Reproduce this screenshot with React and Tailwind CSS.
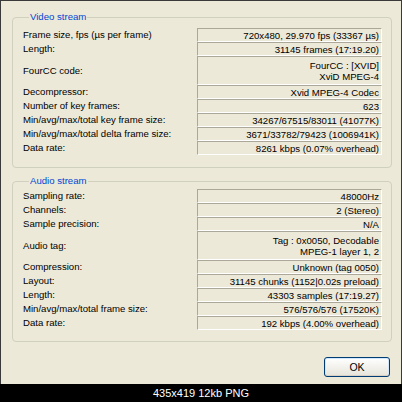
const videoRows = [
  { label: "Frame size, fps (µs per frame)", value: ["720x480, 29.970 fps (33367 µs)"] },
  { label: "Length:", value: ["31145 frames (17:19.20)"] },
  { label: "FourCC code:", value: ["FourCC : [XVID]", "XviD MPEG-4"] },
  { label: "Decompressor:", value: ["Xvid MPEG-4 Codec"] },
  { label: "Number of key frames:", value: ["623"] },
  { label: "Min/avg/max/total key frame size:", value: ["34267/67515/83011 (41077K)"] },
  { label: "Min/avg/max/total delta frame size:", value: ["3671/33782/79423 (1006941K)"] },
  { label: "Data rate:", value: ["8261 kbps (0.07% overhead)"] },
];

const audioRows = [
  { label: "Sampling rate:", value: ["48000Hz"] },
  { label: "Channels:", value: ["2 (Stereo)"] },
  { label: "Sample precision:", value: ["N/A"] },
  { label: "Audio tag:", value: ["Tag : 0x0050, Decodable", "MPEG-1 layer 1, 2"] },
  { label: "Compression:", value: ["Unknown (tag 0050)"] },
  { label: "Layout:", value: ["31145 chunks (1152|0.02s preload)"] },
  { label: "Length:", value: ["43303 samples (17:19.27)"] },
  { label: "Min/avg/max/total frame size:", value: ["576/576/576 (17520K)"] },
  { label: "Data rate:", value: ["192 kbps (4.00% overhead)"] },
];

function Row({ label, value }) {
  const tall = value.length > 1;
  return (
    <div className="flex items-center">
      <div className="w-[174px] leading-[12px]">{label}</div>
      <div
        className={
          (tall ? "h-[29px] " : "h-[14px] ") +
          "w-[185px] border border-t-[#aca899] border-l-[#aca899] border-b-white border-r-white flex flex-col justify-center items-end pr-[2px] leading-[11px] whitespace-nowrap"
        }
      >
        {value.map((v) => (
          <span key={v}>{v}</span>
        ))}
      </div>
    </div>
  );
}

function Group({ title, rows, className }) {
  return (
    <fieldset className={"w-[380px] border border-[#d0d0bf] rounded-[4px] pl-[10px] pr-[8px] " + className}>
      <legend className="ml-[6px] px-[1px] text-[#0046d5] leading-[12px]">{title}</legend>
      <div className="flex flex-col">
        {rows.map((r) => (
          <Row key={r.label} {...r} />
        ))}
      </div>
    </fieldset>
  );
}

export default function App() {
  return (
    <div
      className="w-[402px] h-[402px] bg-black flex flex-col text-black"
      style={{ fontFamily: '"Liberation Sans", Arial, sans-serif' }}
    >
      <div className="h-[384px] bg-[#ece9d8] border-x border-t border-[#3a3a3a] pl-[11px] pr-[9px] pt-[10px] flex flex-col text-[9.6px]">
        <Group title="Video stream" rows={videoRows} className="pt-[5px] pb-[12px]" />
        <Group title="Audio stream" rows={audioRows} className="mt-[7px] pt-[2px] pb-[11px]" />
        <div className="flex justify-end mt-[15px] pr-[2px]">
          <button className="w-[66px] h-[20px] rounded-[3px] border border-[#003c74] bg-gradient-to-b from-white to-[#e6e4da] shadow-[inset_0_-1px_0_#d6d0c5,inset_0_0_0_1px_#cee7ff] text-[10.5px] leading-none">
            OK
          </button>
        </div>
      </div>
      <div className="flex-1 flex items-center justify-center text-white text-[11px]">
        435x419 12kb PNG
      </div>
    </div>
  );
}
